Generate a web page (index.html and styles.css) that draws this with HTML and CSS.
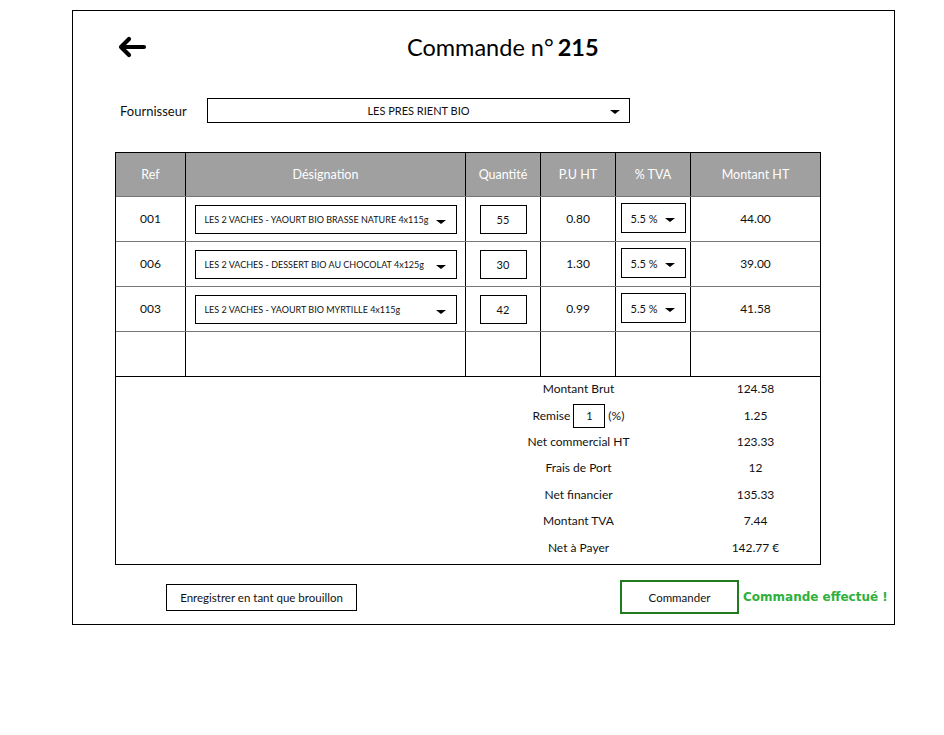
FILE: index.html
```html
<!DOCTYPE html>
<html lang="fr">
<head>
<meta charset="utf-8">
<title>Commande n° 215</title>
<link rel="stylesheet" href="styles.css">
</head>
<body>
<div class="frame">
  <div class="header">
    <svg class="back" width="30" height="22" viewBox="0 0 30 22" aria-hidden="true">
      <path d="M27 11H5 M12 3L4 11L12 19" fill="none" stroke="#000" stroke-width="4.2" stroke-linecap="round" stroke-linejoin="round"/>
    </svg>
    <h1 class="title">Commande n°<b>215</b></h1>
  </div>

  <div class="supplier">
    <span class="supplier-label">Fournisseur</span>
    <div class="select supplier-select"><span class="sel-text">LES PRES RIENT BIO</span><span class="caret"></span></div>
  </div>

  <div class="table">
    <div class="row head">
      <div class="cell">Ref</div>
      <div class="cell">Désignation</div>
      <div class="cell">Quantité</div>
      <div class="cell">P.U HT</div>
      <div class="cell">% TVA</div>
      <div class="cell">Montant HT</div>
    </div>
    <div class="row line">
      <div class="cell">001</div>
      <div class="cell"><div class="select desig"><span class="sel-text">LES 2 VACHES - YAOURT BIO BRASSE NATURE 4x115g</span><span class="caret"></span></div></div>
      <div class="cell"><div class="qty">55</div></div>
      <div class="cell">0.80</div>
      <div class="cell"><div class="select tva"><span class="sel-text">5.5 %</span><span class="caret"></span></div></div>
      <div class="cell">44.00</div>
    </div>
    <div class="row line">
      <div class="cell">006</div>
      <div class="cell"><div class="select desig"><span class="sel-text">LES 2 VACHES - DESSERT BIO AU CHOCOLAT 4x125g</span><span class="caret"></span></div></div>
      <div class="cell"><div class="qty">30</div></div>
      <div class="cell">1.30</div>
      <div class="cell"><div class="select tva"><span class="sel-text">5.5 %</span><span class="caret"></span></div></div>
      <div class="cell">39.00</div>
    </div>
    <div class="row line">
      <div class="cell">003</div>
      <div class="cell"><div class="select desig"><span class="sel-text">LES 2 VACHES - YAOURT BIO MYRTILLE 4x115g</span><span class="caret"></span></div></div>
      <div class="cell"><div class="qty">42</div></div>
      <div class="cell">0.99</div>
      <div class="cell"><div class="select tva"><span class="sel-text">5.5 %</span><span class="caret"></span></div></div>
      <div class="cell">41.58</div>
    </div>
    <div class="row line empty">
      <div class="cell"></div><div class="cell"></div><div class="cell"></div><div class="cell"></div><div class="cell"></div><div class="cell"></div>
    </div>
    <div class="totals">
      <div class="trow"><span class="tl">Montant Brut</span><span class="tv">124.58</span></div>
      <div class="trow"><span class="tl">Remise <span class="remise-box">1</span> (%)</span><span class="tv">1.25</span></div>
      <div class="trow"><span class="tl">Net commercial HT</span><span class="tv">123.33</span></div>
      <div class="trow"><span class="tl">Frais de Port</span><span class="tv">12</span></div>
      <div class="trow"><span class="tl">Net financier</span><span class="tv">135.33</span></div>
      <div class="trow"><span class="tl">Montant TVA</span><span class="tv">7.44</span></div>
      <div class="trow"><span class="tl">Net à Payer</span><span class="tv">142.77 €</span></div>
    </div>
  </div>

  <div class="actions">
    <div class="btn draft">Enregistrer en tant que brouillon</div>
    <div class="btn order">Commander</div>
    <span class="success">Commande effectué !</span>
  </div>
</div>
</body>
</html>
```

FILE: styles.css
```css
* { box-sizing: border-box; }
body {
  margin: 0;
  background: #fff;
  font-family: Lato, "Open Sans", sans-serif;
  color: #111;
}
.frame {
  margin: 10px 0 0 72px;
  width: 823px;
  height: 615px;
  border: 1px solid #000;
  position: relative;
}
.header {
  display: flex;
  align-items: center;
  height: 76px;
  padding: 0 0 0 44px;
}
.back { display: block; margin-top: -5px; }
.title {
  margin: -4px 0 0 260px;
  font-weight: 400;
  font-size: 23.5px;
  color: #000;
  white-space: nowrap;
}
.title b { font-weight: 700; margin-left: 4px; }

.supplier {
  display: flex;
  align-items: center;
  padding-left: 47px;
  height: 25px;
  margin-top: 11px;
}
.supplier-label { font-size: 13px; width: 87px; color: #111; }
.select {
  display: flex;
  align-items: center;
  border: 1px solid #000;
  background: #fff;
  position: relative;
  white-space: nowrap;
}
.supplier-select {
  width: 423px;
  height: 25px;
  justify-content: center;
  font-size: 11px;
}
.supplier-select .caret { position: absolute; right: 9px; top: 11px; }
.caret {
  width: 0; height: 0;
  border-left: 5px solid transparent;
  border-right: 5px solid transparent;
  border-top: 4px solid #000;
}

.table {
  margin: 29px 0 0 42px;
  width: 706px;
  border: 1px solid #000;
}
.row {
  display: grid;
  grid-template-columns: 70px 280px 75px 75px 75px 129px;
}
.row .cell {
  display: flex;
  align-items: center;
  justify-content: center;
  border-right: 1px solid #000;
  font-size: 12px;
}
.row .cell:last-child { border-right: 0; }
.head {
  background: #a0a0a0;
  height: 44px;
  border-bottom: 1px solid #777;
}
.head .cell { color: #fff; font-size: 12.5px; }
.line { height: 45px; border-bottom: 1px solid #777; }
.line .cell { padding-bottom: 2px; }
.line.empty { height: 45px; border-bottom: 1px solid #000; }

.desig {
  width: 262px;
  height: 29px;
  padding-left: 9px;
  font-size: 9px;
  margin-top: 2px;
}
.desig .caret { position: absolute; right: 10px; top: 14px; }
.qty {
  width: 47px;
  height: 29px;
  border: 1px solid #000;
  display: flex;
  align-items: center;
  justify-content: center;
  font-size: 11px;
  margin-top: 2px;
}
.tva {
  width: 65px;
  height: 30px;
  padding-left: 9px;
  font-size: 11px;
}
.tva .caret { position: absolute; right: 10px; top: 14px; }

.totals {
  display: flex;
  flex-direction: column;
  height: 187px;
  padding-bottom: 2px;
}
.trow {
  display: grid;
  grid-template-columns: 350px 225px 129px;
  height: 26.5px;
  align-items: center;
  font-size: 12px;
  line-height: 14px;
  padding-bottom: 2px;
}
.tl { grid-column: 2; display: flex; justify-content: center; align-items: center; gap: 3px; }
.tv { grid-column: 3; text-align: center; }
.remise-box {
  display: inline-flex;
  width: 32px;
  height: 24px;
  border: 1px solid #000;
  align-items: center;
  justify-content: center;
  font-size: 11px;
}

.actions {
  display: flex;
  align-items: center;
  margin-top: 15px;
  padding-left: 93px;
}
.btn {
  display: flex;
  align-items: center;
  justify-content: center;
  font-size: 11.5px;
  white-space: nowrap;
}
.draft {
  width: 191px;
  height: 27px;
  border: 1px solid #000;
}
.order {
  margin-left: 263px;
  width: 119px;
  height: 34px;
  border: 2px solid #1e7b1e;
}
.success {
  margin-left: 4px;
  font-family: "DejaVu Sans", sans-serif;
  font-weight: 700;
  font-size: 12px;
  color: #2eb03d;
  white-space: nowrap;
}
```
